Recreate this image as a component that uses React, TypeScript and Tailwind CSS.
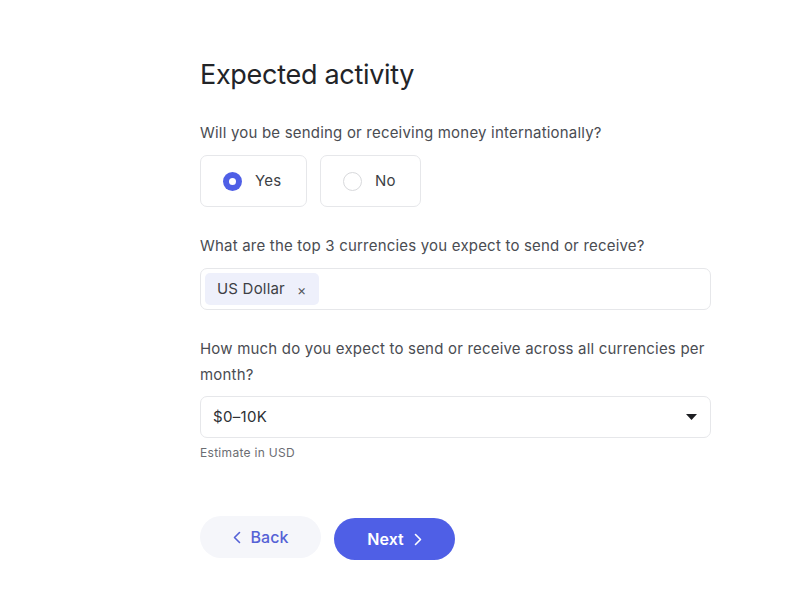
import React, { useState } from 'react';

const font = { fontFamily: 'Inter, "Noto Sans", sans-serif' };

export default function App() {
    const [answer, setAnswer] = useState<'yes' | 'no'>('yes');

    return (
        <div className="min-h-screen bg-white" style={font}>
            <div className="pl-[200px] pt-[58px] w-[711px]">
                <h1 className="text-[27px] leading-[34px] text-[#222428] tracking-[-0.3px]">Expected activity</h1>

                <p className="mt-[28px] text-[15px] leading-[26px] text-[#4a4c52] tracking-[0.2px]">
                    Will you be sending or receiving money internationally?
                </p>

                <div className="mt-[9px] flex gap-[13px]">
                    <RadioCard label="Yes" width="w-[107px]" checked={answer === 'yes'} onClick={() => setAnswer('yes')} />
                    <RadioCard label="No" width="w-[101px]" checked={answer === 'no'} onClick={() => setAnswer('no')} />
                </div>

                <p className="mt-[26px] text-[15px] leading-[26px] text-[#4a4c52] tracking-[0.2px]">
                    What are the top 3 currencies you expect to send or receive?
                </p>
                <div className="mt-[9px] h-[42px] rounded-[7px] border border-[#e6e7ea] flex items-center px-[4px]">
                    <span className="h-[32px] rounded-[5px] bg-[#eef0fb] flex items-center pl-[12px] pr-[13px] text-[15px] text-[#3d3f45] tracking-[0.2px]">
                        US Dollar
                        <span className="ml-[12px] text-[14px] text-[#55575c]">×</span>
                    </span>
                </div>

                <p className="mt-[26px] text-[15px] leading-[26px] text-[#4a4c52] tracking-[0.2px]">
                    How much do you expect to send or receive across all currencies per month?
                </p>
                <div className="mt-[8px] h-[42px] rounded-[7px] border border-[#e6e7ea] flex items-center justify-between pl-[12px] pr-[13px]">
                    <span className="text-[15px] text-[#2e3035] tracking-[0.3px]">$0–10K</span>
                    <svg width="11" height="6" viewBox="0 0 11 6">
                        <path d="M0 0h11L5.5 6z" fill="#1d1e22" />
                    </svg>
                </div>
                <p className="mt-[7px] text-[12px] leading-[16px] text-[#6b6d72] tracking-[0.3px]">Estimate in USD</p>

                <div className="mt-[55px] flex items-start gap-[13px]">
                    <button className="w-[121px] h-[42px] rounded-full bg-[#f5f6fa] flex items-center justify-center gap-[10px] text-[16px] font-medium text-[#5562d6]">
                        <svg width="8" height="13" viewBox="0 0 8 13">
                            <path d="M6.5 1.5 1.5 6.5l5 5" fill="none" stroke="#5562d6" strokeWidth="1.6" strokeLinecap="round" strokeLinejoin="round" />
                        </svg>
                        Back
                    </button>
                    <button className="mt-[2px] w-[121px] h-[42px] rounded-full bg-[#4f5fe6] flex items-center justify-center gap-[10px] text-[16px] font-semibold text-white">
                        Next
                        <svg width="8" height="13" viewBox="0 0 8 13">
                            <path d="M1.5 1.5l5 5-5 5" fill="none" stroke="#ffffff" strokeWidth="1.6" strokeLinecap="round" strokeLinejoin="round" />
                        </svg>
                    </button>
                </div>
            </div>
        </div>
    );
}

const RadioCard = ({ label, width, checked, onClick }: { label: string; width: string; checked: boolean; onClick: () => void }) => (
    <button
        onClick={onClick}
        className={`${width} h-[52px] rounded-[7px] border border-[#e6e7ea] bg-white flex items-center pl-[22px] gap-[13px] text-[15px] text-[#3d3f45] tracking-[0.2px]`}
    >
        {checked ? (
            <span className="size-[19px] rounded-full bg-[#4f5fe6] flex items-center justify-center">
                <span className="size-[7px] rounded-full bg-white" />
            </span>
        ) : (
            <span className="size-[19px] rounded-full border border-[#d8d9dc] bg-white" />
        )}
        {label}
    </button>
);
